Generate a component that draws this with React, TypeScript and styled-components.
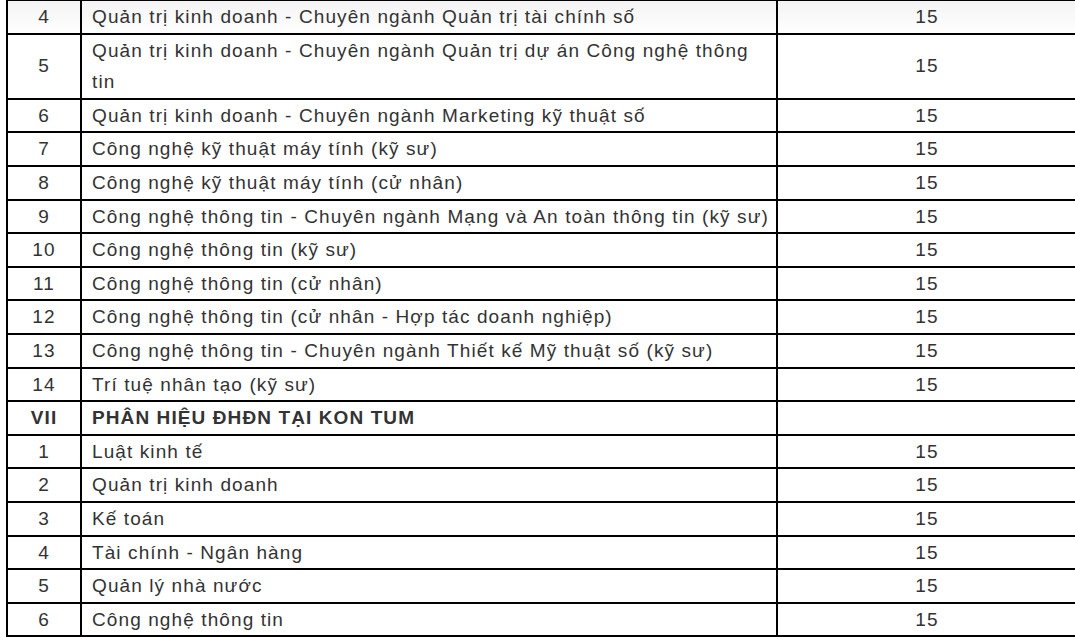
import React from "react";
import styled, { createGlobalStyle } from "styled-components";

const Global = createGlobalStyle`
  html, body { margin: 0; padding: 0; background: #fff; }
  body { font-family: "Liberation Sans", Arial, sans-serif; overflow: hidden; }
`;

const Page = styled.div`
  padding-left: 6px;
  width: 1075px;
  height: 637px;
  overflow: hidden;
  box-sizing: border-box;
`;

const Table = styled.table`
  border-collapse: collapse;
  width: 1070px;
  margin-top: -1px;
  table-layout: fixed;
  color: #333;
  font-size: 19px;
  letter-spacing: 1.1px;
  line-height: 31.6px;
`;

const Cell = styled.td<{ $align?: "left" | "center"; $bold?: boolean }>`
  border: 2px solid #000;
  padding: ${(p) => (p.$align === "center" ? "0 6px" : "0 2px 0 10px")};
  text-align: ${(p) => p.$align ?? "left"};
  font-weight: ${(p) => (p.$bold ? 700 : 400)};
  vertical-align: middle;
`;

const Row = styled.tr<{ $shade?: boolean }>`
  background: ${(p) => (p.$shade ? "linear-gradient(#f3f3f3, #ffffff)" : "#fff")};
`;

type R = { no: string; name: string; score: string; bold?: boolean };

const rows: R[] = [
  { no: "4", name: "Quản trị kinh doanh - Chuyên ngành Quản trị tài chính số", score: "15" },
  { no: "5", name: "Quản trị kinh doanh - Chuyên ngành Quản trị dự án Công nghệ thông tin", score: "15" },
  { no: "6", name: "Quản trị kinh doanh - Chuyên ngành Marketing kỹ thuật số", score: "15" },
  { no: "7", name: "Công nghệ kỹ thuật máy tính (kỹ sư)", score: "15" },
  { no: "8", name: "Công nghệ kỹ thuật máy tính (cử nhân)", score: "15" },
  { no: "9", name: "Công nghệ thông tin - Chuyên ngành Mạng và An toàn thông tin (kỹ sư)", score: "15" },
  { no: "10", name: "Công nghệ thông tin (kỹ sư)", score: "15" },
  { no: "11", name: "Công nghệ thông tin (cử nhân)", score: "15" },
  { no: "12", name: "Công nghệ thông tin (cử nhân - Hợp tác doanh nghiệp)", score: "15" },
  { no: "13", name: "Công nghệ thông tin - Chuyên ngành Thiết kế Mỹ thuật số (kỹ sư)", score: "15" },
  { no: "14", name: "Trí tuệ nhân tạo (kỹ sư)", score: "15" },
  { no: "VII", name: "PHÂN HIỆU ĐHĐN TẠI KON TUM", score: "", bold: true },
  { no: "1", name: "Luật kinh tế", score: "15" },
  { no: "2", name: "Quản trị kinh doanh", score: "15" },
  { no: "3", name: "Kế toán", score: "15" },
  { no: "4", name: "Tài chính - Ngân hàng", score: "15" },
  { no: "5", name: "Quản lý nhà nước", score: "15" },
  { no: "6", name: "Công nghệ thông tin", score: "15" },
];

export default function App() {
  return (
    <Page>
      <Global />
      <Table>
        <colgroup>
          <col style={{ width: 74 }} />
          <col style={{ width: 696 }} />
          <col style={{ width: 300 }} />
        </colgroup>
        <tbody>
          {rows.map((r, i) => (
            <Row key={i} $shade={i === 0}>
              <Cell $align="center" $bold={r.bold}>{r.no}</Cell>
              <Cell $bold={r.bold}>{r.name}</Cell>
              <Cell $align="center">{r.score}</Cell>
            </Row>
          ))}
        </tbody>
      </Table>
    </Page>
  );
}
